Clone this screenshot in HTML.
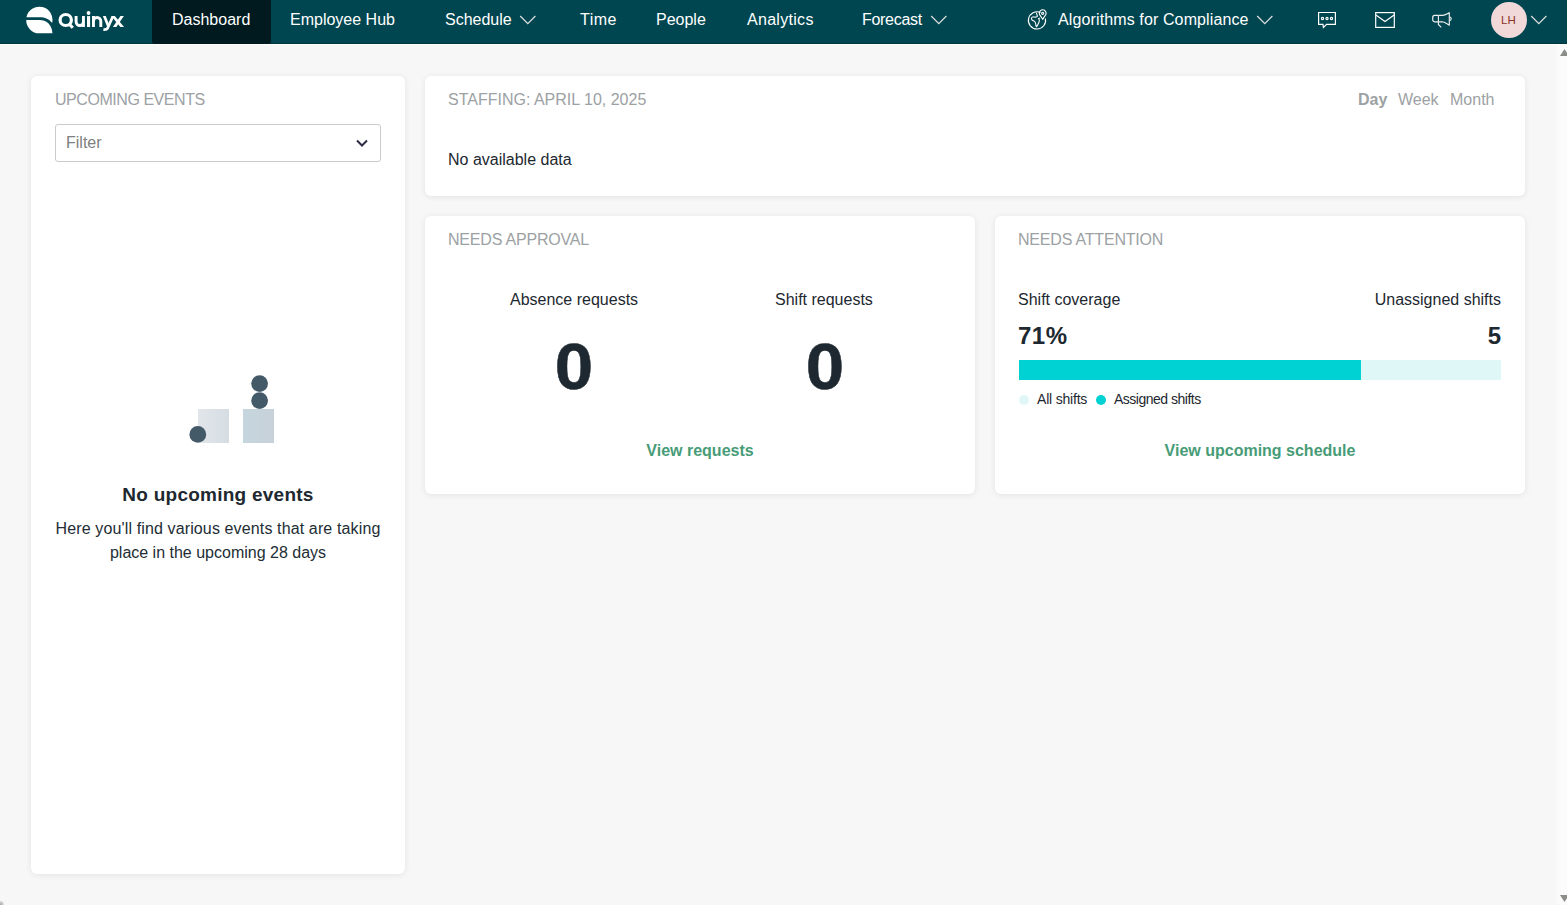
<!DOCTYPE html>
<html><head><meta charset="utf-8">
<style>
*{box-sizing:border-box;margin:0;padding:0}
html,body{width:1567px;height:905px;overflow:hidden;background:#f7f7f7;font-family:"Liberation Sans",sans-serif}
.a{position:absolute;white-space:nowrap}
#hdr{position:absolute;left:0;top:0;width:1567px;height:45px;background:#004650;border-bottom:1px solid #ffffff}
#hdr:after{content:"";position:absolute;left:0;right:0;top:43px;height:1px;background:#00363e}
#tab{position:absolute;left:152px;top:0;width:119px;height:44px;background:#001a1f;border-radius:0 0 3px 3px}
.nav{position:absolute;top:0;height:16px;line-height:16px;font-size:16px;color:#fff;white-space:nowrap}
.chev{position:absolute}
.card{position:absolute;background:#fff;border-radius:6px;box-shadow:0 1px 6px rgba(0,0,0,0.085)}
.t16{font-size:16px;line-height:16px;height:16px}
.hd{color:#9ca1a4}
.dk{color:#1d2830}
.grn{color:#479c77;font-weight:bold}
#sb{position:absolute;left:1557px;top:45px;width:10px;height:860px;background:#fbfbfb}
</style></head>
<body>
<div id="hdr"></div>
<div id="tab"></div>
<!-- logo -->
<svg class="a" style="left:22px;top:4px" width="34" height="32" viewBox="0 0 34 32">
 <path fill="#fff" d="M4.44,13.2 A13.15,13.15 0 1 1 30.06,19.1 C27.5,15.2 23,13.2 17.7,13.2 Z"/>
 <path fill="#fff" d="M4.2,16.1 L17.7,16.1 C24,16.1 30,20.5 30.4,29.2 L17.25,29.3 A13.15,13.15 0 0 1 4.2,16.1 Z"/>
</svg>
<svg class="a" style="left:0;top:0" width="130" height="40" viewBox="0 0 130 40" fill="none" stroke="#fff" stroke-width="3">
 <defs><clipPath id="cx"><rect x="100" y="16.1" width="30" height="10.9"/></clipPath><clipPath id="cy"><rect x="100" y="16.1" width="30" height="20"/></clipPath></defs>
 <ellipse cx="65.75" cy="20" rx="5.65" ry="5.5" stroke-width="3.2"/>
 <path d="M69.2,24.1 L72.8,27.8"/>
 <path d="M76.1,16.1 V21.8 A3.67,3.67 0 0 0 83.45,21.8 V16.1 M83.45,20 V27" stroke-width="2.9"/>
 <path d="M88.55,16.1 V27" stroke-width="3.1"/>
 <circle cx="88.55" cy="13" r="1.9" fill="#fff" stroke="none"/>
 <path d="M93.45,16.1 V27 M93.45,21.2 A3.67,3.67 0 0 1 100.8,21.2 V27" stroke-width="2.9"/>
 <g clip-path="url(#cy)" stroke-width="2.7"><path d="M103.9,15 L108.4,26.2"/><path d="M113.5,15 L107.6,28.2 Q106.6,29.9 103.4,29.6"/></g>
 <g clip-path="url(#cx)" stroke-width="2.8"><path d="M112.3,15.2 L123.1,28"/><path d="M122.7,15.2 L113.9,28"/></g>
</svg>

<div class="nav" style="left:172px;top:12px">Dashboard</div>
<div class="nav" style="left:290px;top:12px">Employee Hub</div>
<div class="nav" style="left:445px;top:12px">Schedule</div>
<svg class="a" style="left:519px;top:15px" width="18" height="10" viewBox="0 0 18 10"><path d="M1.2,1 L8.8,8.6 L16.4,1" fill="none" stroke="#d9dcdc" stroke-width="1.3"/></svg>
<div class="nav" style="left:580px;top:12px;letter-spacing:0.5px">Time</div>
<div class="nav" style="left:656px;top:12px">People</div>
<div class="nav" style="left:747px;top:12px;letter-spacing:0.3px">Analytics</div>
<div class="nav" style="left:862px;top:12px;letter-spacing:-0.3px">Forecast</div>
<svg class="a" style="left:930px;top:15px" width="18" height="10" viewBox="0 0 18 10"><path d="M1.2,1 L8.8,8.6 L16.4,1" fill="none" stroke="#d9dcdc" stroke-width="1.3"/></svg>
<!-- globe -->
<svg class="a" style="left:1024px;top:6px" width="26" height="26" viewBox="0 0 26 26" fill="none" stroke="#fff" stroke-width="1.1">
 <path d="M16.5,6.5 A8.6,8.6 0 1 0 21.4,12.5"/>
 <path d="M12.4,6.6 C12.2,8 13.8,9.2 13.3,10.6 C12.8,11.6 10,10.8 8.6,11 C7,11.3 7.2,13.5 8.4,14.3 C9.6,15.1 11.2,15.3 11.5,17 C11.9,18.8 11.8,20.2 12.4,20.8 C13.6,20 14.2,18 15,16.2 C15.8,14.4 15.2,13.2 14.6,12.6 C15,12 15.6,12.3 16,12.1"/>
 <path d="M18.7,13.2 L16.3,9.6 A3.4,3.4 0 1 1 21.1,9.6 Z"/>
 <circle cx="18.7" cy="7.3" r="1.1"/>
</svg>
<div class="nav" style="left:1058px;top:12px;letter-spacing:0.12px">Algorithms for Compliance</div>
<svg class="a" style="left:1256px;top:15px" width="18" height="10" viewBox="0 0 18 10"><path d="M1.2,1 L8.8,8.6 L16.4,1" fill="none" stroke="#d9dcdc" stroke-width="1.3"/></svg>
<!-- chat -->
<svg class="a" style="left:1312px;top:6px" width="30" height="28" viewBox="0 0 30 28" fill="none" stroke="#fff" stroke-width="1.2">
 <path d="M6.6,6.5 H23.4 V18.3 H14.6 L11.4,21.4 L11,18.3 H6.6 Z"/>
 <circle cx="10.5" cy="12.5" r="1.1"/><circle cx="15" cy="12.5" r="1.1"/><circle cx="19.5" cy="12.5" r="1.1"/>
</svg>
<!-- mail -->
<svg class="a" style="left:1370px;top:6px" width="30" height="28" viewBox="0 0 30 28" fill="none" stroke="#fff" stroke-width="1.2">
 <rect x="5.7" y="6.6" width="18.6" height="14.8"/>
 <path d="M5.9,9 L15,15.4 L24.1,9"/>
</svg>
<!-- megaphone -->
<svg class="a" style="left:1427px;top:6px" width="30" height="28" viewBox="0 0 30 28" fill="none" stroke="#eee" stroke-width="1.15" stroke-linejoin="round">
 <path d="M11.4,9.4 H7.6 C6.4,9.4 5.7,10.4 5.7,11.6 V13.6 C5.7,14.9 6.5,15.8 7.7,15.8 H11.4"/>
 <path d="M11.4,9.4 H15.6 C18,9.4 20,7.9 22.3,6.7 V19.2 C20,17.8 18,16 15.4,15.8 H11.4"/>
 <path d="M11.4,9.4 V18.5 L14.3,21.3"/>
 <path d="M22.4,11 A1.8,1.8 0 0 1 22.4,14.6"/>
</svg>
<!-- avatar -->
<div class="a" style="left:1491px;top:2px;width:36px;height:36px;border-radius:50%;background:#f1d9da"></div>
<div class="a" style="left:1501px;top:15px;font-size:11.5px;line-height:11px;color:#8a3329;letter-spacing:0.2px">LH</div>
<svg class="a" style="left:1530px;top:15px" width="18" height="10" viewBox="0 0 18 10"><path d="M1.2,1 L8.8,8.6 L16.4,1" fill="none" stroke="#d9dcdc" stroke-width="1.3"/></svg>

<!-- scrollbar -->
<div id="sb"></div>
<svg class="a" style="left:1557px;top:45px" width="15" height="15" viewBox="0 0 15 15"><path d="M3,11 L7.5,4 L12,11 Z" fill="#8a8d88"/></svg>
<svg class="a" style="left:1557px;top:890px" width="15" height="15" viewBox="0 0 15 15"><path d="M3,5 L12,5 L7.5,12 Z" fill="#8a8d88"/></svg>

<!-- left card -->
<div class="card" style="left:31px;top:76px;width:374px;height:798px"></div>
<div class="a t16 hd" style="left:55px;top:92px;letter-spacing:-0.45px">UPCOMING EVENTS</div>
<div class="a" style="left:55px;top:124px;width:326px;height:38px;border:1px solid #c9cbcd;border-radius:3px;background:#fff"></div>
<div class="a t16" style="left:66px;top:135px;color:#7d8080">Filter</div>
<svg class="a" style="left:354px;top:136px" width="16" height="14" viewBox="0 0 16 14"><path d="M3,4.5 L8,9.5 L13,4.5" fill="none" stroke="#2c2c44" stroke-width="2"/></svg>
<!-- illustration -->
<svg class="a" style="left:180px;top:365px" width="110" height="85" viewBox="0 0 110 85">
 <defs>
  <linearGradient id="g1" x1="0" x2="1"><stop offset="0" stop-color="#e2e6ea"/><stop offset="1" stop-color="#d5dde3"/></linearGradient>
  <linearGradient id="g2" x1="0" x2="1"><stop offset="0" stop-color="#c6d6de"/><stop offset="1" stop-color="#c7d1d9"/></linearGradient>
 </defs>
 <rect x="18" y="44" width="31" height="34" fill="url(#g1)"/>
 <rect x="63" y="44" width="31" height="34" fill="url(#g2)"/>
 <circle cx="17.8" cy="69.4" r="8.4" fill="#455a69"/>
 <circle cx="79.6" cy="18.6" r="8.4" fill="#455a69"/>
 <circle cx="79.6" cy="35.6" r="8.4" fill="#455a69"/>
</svg>
<div class="a dk" style="left:31px;top:485px;width:374px;text-align:center;font-size:19px;line-height:19px;font-weight:bold;letter-spacing:0.25px">No upcoming events</div>
<div class="a dk" style="left:31px;top:517px;width:374px;text-align:center;font-size:16px;line-height:24px;white-space:normal;color:#222d34"><span style="letter-spacing:0.13px">Here you'll find various events that are taking</span><br>place in the upcoming 28 days</div>

<!-- staffing card -->
<div class="card" style="left:425px;top:76px;width:1100px;height:120px"></div>
<div class="a t16 hd" style="left:448px;top:92px">STAFFING: APRIL 10, 2025</div>
<div class="a t16 hd" style="left:1358px;top:92px;font-weight:bold">Day</div>
<div class="a t16 hd" style="left:1398px;top:92px">Week</div>
<div class="a t16 hd" style="left:1450px;top:92px">Month</div>
<div class="a t16 dk" style="left:448px;top:152px">No available data</div>

<!-- needs approval -->
<div class="card" style="left:425px;top:216px;width:550px;height:278px"></div>
<div class="a t16 hd" style="left:448px;top:232px;letter-spacing:-0.2px">NEEDS APPROVAL</div>
<div class="a t16 dk" style="left:510px;top:292px">Absence requests</div>
<div class="a t16 dk" style="left:775px;top:292px">Shift requests</div>
<div class="a dk" style="left:474px;top:335px;width:200px;text-align:center;font-size:64px;line-height:64px;font-weight:bold;transform:scaleX(1.08);-webkit-text-stroke:0.5px #1d2830">0</div>
<div class="a dk" style="left:725px;top:335px;width:200px;text-align:center;font-size:64px;line-height:64px;font-weight:bold;transform:scaleX(1.08);-webkit-text-stroke:0.5px #1d2830">0</div>
<div class="a t16 grn" style="left:425px;top:443px;width:550px;text-align:center">View requests</div>

<!-- needs attention -->
<div class="card" style="left:995px;top:216px;width:530px;height:278px"></div>
<div class="a t16 hd" style="left:1018px;top:232px;letter-spacing:-0.2px">NEEDS ATTENTION</div>
<div class="a t16 dk" style="left:1018px;top:292px">Shift coverage</div>
<div class="a t16 dk" style="left:1301px;top:292px;width:200px;text-align:right">Unassigned shifts</div>
<div class="a dk" style="left:1018px;top:324px;font-size:24px;line-height:24px;font-weight:bold;letter-spacing:0.5px">71%</div>
<div class="a dk" style="left:1301px;top:324px;width:200px;text-align:right;font-size:24px;line-height:24px;font-weight:bold">5</div>
<div class="a" style="left:1019px;top:360px;width:482px;height:20px;background:#e0f7f8"></div>
<div class="a" style="left:1019px;top:360px;width:342px;height:20px;background:#00d2d3"></div>
<div class="a" style="left:1019px;top:395px;width:10px;height:10px;border-radius:50%;background:#e0f7f8"></div>
<div class="a dk" style="left:1037px;top:392px;font-size:14px;line-height:14px;letter-spacing:-0.2px">All shifts</div>
<div class="a" style="left:1096px;top:395px;width:10px;height:10px;border-radius:50%;background:#00d2d3"></div>
<div class="a dk" style="left:1114px;top:392px;font-size:14px;line-height:14px;letter-spacing:-0.5px">Assigned shifts</div>
<div class="a t16 grn" style="left:995px;top:443px;width:530px;text-align:center">View upcoming schedule</div>
<div class="a" style="left:-3px;top:901px;width:7px;height:7px;border-radius:50%;background:radial-gradient(circle,#a9acb0 0,#c8cacc 45%,rgba(247,247,247,0) 100%)"></div>
</body></html>
